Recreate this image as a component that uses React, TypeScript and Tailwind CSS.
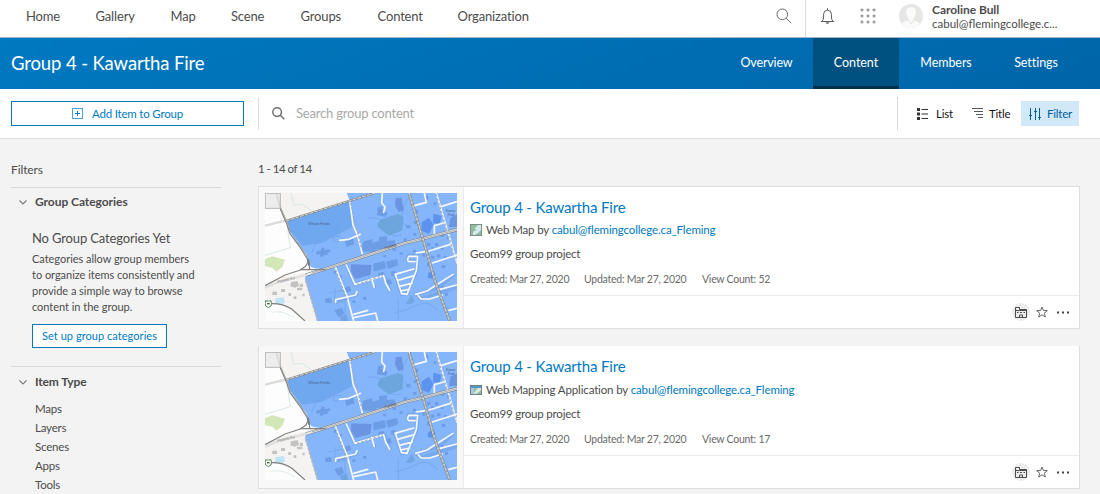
import React from "react";

function MapThumbnail() {
  return (
    <svg className="block h-32 w-48 shrink-0" viewBox="0 0 576 384" fill="none">
      <rect width="576" height="384" fill="#fdfdfd" />
      <path d="M38 0H250L255 24L62 84ZM0 270L60 250L118 238L120 258L157 384H120L60 340L0 330Z" fill="#f5f3f1" />
      <path d="M78 0L86 36L112 34L150 62M66 96L76 164L0 187" stroke="#cfe3e0" strokeWidth="2.5" />
      <path d="M0 98L64 82" stroke="#dadada" strokeWidth="7" />
      <path d="M0 198L22 190L60 200L52 222L34 236L22 224L0 220Z" fill="#d3e6b8" />
      <path d="M32 316L56 312L60 328L50 336L30 332Z" fill="#bfe3f7" />
      <path d="M20 358Q50 350 90 375" stroke="#cfe3d3" strokeWidth="2" />
      <path d="M22 296h14v10H22zM48 288h12v9H48zM78 268l20-4 4 14-12 6-14-4zM96 284h16v8H96zM104 272h10v10h-10zM70 300h8v9h-8zM86 310h8v8h-8zM112 302h7v8h-7z" fill="#c2c2c2" />
      <path d="M67 84L255 24L245 0H576V384H157L120 258L122 247L180 230L150 226L137 222L125 185L75 115Z" fill="#85b5fa" />
      <path d="M67 84L255 24L266 100L210 130L170 150L112 158L75 115Z" fill="#70a8f0" />
      <path d="M140 180Q160 120 205 132Q222 75 255 68M206 136q18-14 28 2q-8 12-28 8zM310 76Q345 66 370 110Q380 138 410 125M440 5Q408 35 410 85L440 110M520 355Q490 320 460 335T390 360M210 285V330M190 300L240 290V384M400 320V384" stroke="#6fa2ea" strokeWidth="2" />
      <g fill="#629fd0">
        <path d="M345 80L400 62L415 72L412 112L372 128L336 100Z" opacity=".7" />
        <path d="M430 320L440 306L450 325L440 332H422ZM225 370l20-5 5 19h-22z" opacity=".6" />
      </g>
      <path d="M392 16l18-2 6 38-16 6-10-22zM258 214l62 2-4 30-44 12-14-22zM556 74l20-10v38h-24z" fill="#6b94e3" />
      <path d="M470 88l22-14 14 22-14 26-22-8zM490 240l14-8 8 12-10 14-14-4zM505 62l25 6-6 26-20-4z" fill="#5b93ef" />
      <g fill="#6c9de5">
        <path d="M154 176l14-4 2-9 10 3-2 6 16-4 2 8-10 3 4 6-14 1-4 6-8-2 2-7-12 2z" />
        <path d="M294 146l28-8v12l20-6v-12l24-2v14l24-2v14l-30 4v12l-26-4v8h-44zM324 212l34-8 6 22-38 10zM362 206l34-8 4 18-30 12zM240 142l24-6 4 18-24 8zM338 44l14-5v14l16 6-6 12-26-4zM340 240l16-3 4 12-18 4zM362 262l14-4 5 14-14 5zM238 284l16-4 5 14-16 5zM208 352l22-8 8 18-18 10zM378 236l12-3 3 14-13 2zM180 318l18-4 2 16h-18z" />
        <path d="M416 136h10v10h-10zM430 142h10v9h-10zM444 120h10v8h-10zM458 134h10v8h-10zM424 96h12v10h-12zM446 84h10v8h-10zM486 150h10v9h-10zM498 162h9v9h-9zM510 150h10v10h-10zM526 160h10v10h-10zM498 188h10v9h-10zM516 184h10v9h-10zM536 190h10v9h-10zM486 210h10v10h-10zM530 216h11v9h-11zM400 150h12v8h-12zM383 166h10v8h-10zM354 186h9v7h-9zM404 178h9v8h-9zM444 170h9v8h-9zM472 182h8v9h-8zM528 122h10v9h-10zM546 130h9v9h-9zM528 280h9v8h-9zM540 300h9v8h-9zM536 340h9v8h-9zM206 234h8v8h-8zM222 246h9v8h-9zM262 322h9v8h-9zM294 312h10v8h-10zM324 278h9v9h-9zM480 8h10v12h-10zM450 50h9v10h-9zM506 28h8v9h-8z" />
      </g>
      <path d="M390 244L410 304L426 302L456 232L458 186L430 188V206L450 202M212 328L278 304M448 306L520 284L566 244M460 308L468 318L576 282M244 216L270 274L356 246L376 294" stroke="#6f9fe2" strokeWidth="11" strokeLinejoin="round" opacity=".55" />
      <g stroke="#f6f8fb" strokeWidth="5" strokeLinecap="round" strokeLinejoin="round">
        <path d="M254 24L264 96L278 128L292 182M224 142L252 139L286 124M352 0L350 30L360 42L356 58" />
        <path d="M210 220L246 310L266 384M212 328L212 320L272 306L276 296M244 216L270 274L356 248L362 270L374 292M320 256L328 284" />
        <path d="M266 364L308 352M266 374L332 360L338 384" />
        <path d="M390 244L446 228M392 246L410 302L426 304L454 232L458 190L432 190Q424 202 432 206L450 206M398 262L448 248M404 280L442 270M408 294L434 288M454 180L480 176" />
        <path d="M478 0L484 28L448 38M508 126V98L536 90M530 40L576 26M492 174L556 154M502 210L576 186M452 304L486 294L564 244M460 308L468 318H494L532 306M522 290L576 276M552 352L576 346M514 0L576 210" />
      </g>
      <path d="M514 4L574 206M257 30L290 170M276 274L354 248M212 230L248 324" stroke="#a5a5a5" strokeWidth="3" strokeDasharray="7 6" />
      <path d="M122 262L158 384" stroke="#b5b5b5" strokeWidth="5" strokeDasharray="9 4" />
      <path d="M0 284L32 270L122 246" stroke="#e1e1e1" strokeWidth="8" />
      <path d="M122 246L180 228L420 150L470 138L576 110" stroke="#747d86" strokeWidth="10" />
      <path d="M122 246L180 228L420 150L470 138L576 110" stroke="#e9e9e9" strokeWidth="6.5" />
      <path d="M140 240L180 228L420 150L470 138L576 110" stroke="#929292" strokeWidth="2" />
      <path d="M432 0L474 138L510 264L554 384" stroke="#727a80" strokeWidth="8" />
      <path d="M432 0L474 138L510 264L554 384" stroke="#d6d6d6" strokeWidth="5" />
      <path d="M434 6L474 138L510 264L554 384" stroke="#858585" strokeWidth="2" strokeDasharray="8 5" />
      <path d="M62 84L252 24L330 0" stroke="#7f7f7f" strokeWidth="6" />
      <path d="M62 84L252 24L330 0" stroke="#dddddd" strokeWidth="3" strokeDasharray="12 3" />
      <path d="M34 0L48 50L66 92L76 122L108 165L128 198L132 218" stroke="#6c6c6c" strokeWidth="5" />
      <path d="M35 0L49 50L67 92L77 122L109 165L128 198" stroke="#eeeeee" strokeWidth="1.5" />
      <path d="M0 278L60 246L104 232L122 220L132 202M104 230H182M134 228L132 204M0 334Q44 326 80 348L120 384" stroke="#818181" strokeWidth="3.5" />
      <text x="130" y="96" fontSize="11" fill="#3f638c" fontFamily="Liberation Sans">Wilson Fields</text>
      <text x="543" y="56" fontSize="10" fill="#3f638c" fontFamily="Liberation Sans">Kawar</text>
      <text x="548" y="68" fontSize="10" fill="#3f638c" fontFamily="Liberation Sans">Park</text>
      <text transform="translate(38 270) rotate(-13)" fontSize="11" fill="#777" fontFamily="Liberation Sans">Parkhill Rd</text>
      <text transform="translate(360 169) rotate(-15)" fontSize="11" fill="#333" fontFamily="Liberation Sans">Parkhill</text>
      <path d="M2 323q8 3 16 0q3 10 0 16l-8 5-8-5q-3-8 0-16Z" fill="#f8fff7" stroke="#5d8765" strokeWidth="3" />
      <path d="M6 332h8" stroke="#555" strokeWidth="4" />
      <rect x="1" y="1" width="45" height="45" fill="#e9e9e9" fillOpacity=".82" stroke="#b6b6b6" strokeWidth="3" />
    </svg>
  );
}

function SearchIcon({ className, strokeWidth }: { className: string; strokeWidth: number }) {
  return (
    <svg className={className} viewBox="0 0 16 16" fill="none" stroke="currentColor" strokeWidth={strokeWidth}>
      <circle cx="6.3" cy="6.3" r="5.3" />
      <path d="M10.2 10.2L15.2 15.2" />
    </svg>
  );
}

function ChevronIcon() {
  return (
    <svg className="mr-2 h-[5px] w-[8px]" viewBox="0 0 8 5" fill="none" stroke="#7a7a7a" strokeWidth="1.1">
      <path d="M.5.5L4 4L7.5.5" />
    </svg>
  );
}

function WebMapIcon() {
  return (
    <svg className="mr-1 h-3 w-3" viewBox="0 0 12 12">
      <rect width="12" height="12" fill="#7e8b8b" />
      <rect x="1" y="1" width="10" height="10" fill="#d5e8ed" />
      <path d="M1 1h7L5 4l1 2-3 2v3H1zM11 6v5H5l3-2z" fill="#8fc09b" />
    </svg>
  );
}

function WebAppIcon() {
  return (
    <svg className="mr-1 h-3 w-3" viewBox="0 0 12 12">
      <rect y="1" width="12" height="10" fill="#70838c" />
      <rect x="1" y="2" width="10" height="2" fill="#519ac7" />
      <rect x="1" y="4" width="3" height="6" fill="#a6cbe2" />
      <rect x="4" y="4" width="7" height="6" fill="#d8e9df" />
      <path d="M4 4h4L6 6 4 9zM11 6v4H6l3-2z" fill="#8ebd96" />
    </svg>
  );
}

const navItems = [
  { label: "Home", width: "w-[69.5px]" },
  { label: "Gallery", width: "w-[75px]" },
  { label: "Map", width: "w-[60.5px]" },
  { label: "Scene", width: "w-[69.5px]" },
  { label: "Groups", width: "w-[77px]" },
  { label: "Content", width: "w-[80px]" },
  { label: "Organization", width: "w-[80px]" },
];

function TopBar() {
  return (
    <header className="flex h-[38px] shrink-0 border-b border-[#9fb6c6] bg-white">
      <nav className="flex flex-1 pt-[6px] pl-[26px] text-[13px] leading-5 tracking-[-0.15px] text-[#4c4c4c]">
        {navItems.map((n) => (
          <a key={n.label} className={n.width}>{n.label}</a>
        ))}
      </nav>
      <div className="flex w-[30px] pt-2 pl-px text-[#6a6a6a]">
        <SearchIcon className="h-4 w-4" strokeWidth={1} />
      </div>
      <div className="flex w-[295px] border-l border-[#dadada]">
        <svg className="mt-[8px] ml-[14px] h-[17px] w-[15px]" viewBox="0 0 15 17" fill="none" stroke="#5d5d5d">
          <path d="M.8 13.5h13.4M2.2 13.2Q3.6 11.5 3.6 9V6.2Q3.7 2.2 7.5 2.2T11.4 6.2V9q0 2.5 1.4 4.2M7.5 2V.3" />
          <path d="M5.5 14.2q.3 1.800 2 1.800t2-1.800z" fill="#777" stroke="none" />
        </svg>
        <svg className="mt-[8px] ml-[25px] h-4 w-4" viewBox="0 0 16 16" fill="#b5b5b5" stroke="#858585" strokeWidth=".7">
          {[2, 8, 14].map((y) =>
            [2, 8, 14].map((x) => <circle key={`${x}-${y}`} cx={x} cy={y} r="1.15" />),
          )}
        </svg>
        <svg className="mt-[4px] ml-[23px] h-6 w-6" viewBox="0 0 24 24">
          <circle cx="12" cy="12" r="12" fill="#e6e6e4" />
          <path d="M12 3.2q5 0 4.900 5-.2 4-2.400 6v2l5 2q1.100.6 1.400 1.900A12 12 0 0 1 3.100 20q.3-1.300 1.400-1.900l5-2v-2Q7.200 12 7.100 8.200 7 3.200 12 3.200Z" fill="#fafafa" />
          <path d="M9.500 16.200l2.500 4 2.500-4" fill="none" stroke="#dededc" strokeWidth=".8" />
        </svg>
        <div className="ml-[9px] pt-[3px] leading-[14px] text-[#4c4c4c]">
          <div className="text-[12px] font-bold tracking-[-0.05px]">Caroline Bull</div>
          <div className="text-[11.5px] tracking-[0px]">cabul@flemingcollege.c...</div>
        </div>
      </div>
    </header>
  );
}

function Banner() {
  return (
    <div className="flex h-[51px] shrink-0 bg-[linear-gradient(160deg,#0079c1_0%,#0065a8_100%)] text-white">
      <h1 className="flex-1 pl-[11px] text-[18.5px] leading-[50px] tracking-[-0.12px]">Group 4 - Kawartha Fire</h1>
      <nav className="flex pr-[21px] text-center text-[12.5px] leading-[50px] tracking-[-0.05px]">
        <a className="w-[93px] tracking-[-0.15px]">Overview</a>
        <a className="w-[86px] border-b-3 border-[#00304d] bg-[#005180]">Content</a>
        <a className="w-[94px]">Members</a>
        <a className="w-[86px]">Settings</a>
      </nav>
    </div>
  );
}

function Toolbar() {
  return (
    <div className="flex h-[50px] shrink-0 border-b border-[#dfdfdf] bg-white pt-2 text-[11.5px] tracking-[-0.2px]">
      <button className="mt-1 ml-[11px] flex h-[25px] w-[233px] items-center justify-center border border-[#0079c1] text-[#0079c1]">
        <svg className="mr-[9px] h-[11px] w-[11px]" viewBox="0 0 11 11" fill="none" stroke="#0079c1">
          <rect x=".5" y=".5" width="10" height="10" opacity=".7" />
          <path d="M3 5.500h5M5.500 3v5" />
        </svg>
        Add Item to Group
      </button>
      <div className="ml-[14px] flex h-[33px] flex-1 items-center border-l border-[#dedede] pl-[13px]">
        <SearchIcon className="mr-[11px] h-[13px] w-[13px] text-[#6e6e6e]" strokeWidth={1.8} />
        <span className="text-[13px] tracking-[-0.2px] text-[#a9a9a9]">Search group content</span>
      </div>
      <div className="flex h-[33px] w-[203px] items-center border-l border-[#dadada] pl-[19px] text-[#151515]">
        <svg className="mr-2 h-[12px] w-[11px]" viewBox="0 0 11 12" fill="#333">
          <path d="M0 0h3v3H0zM0 4.500h3v3H0zM0 9h3v3H0zM4.500 1h6.500v1H4.500zM4.500 5.500h6.500v1H4.500zM4.500 10h6.500v1H4.500z" />
        </svg>
        <span className="w-[36px]">List</span>
        <svg className="mr-[6px] h-[11px] w-[11px]" viewBox="0 0 11 11" stroke="#555">
          <path d="M0 .5h11M2 3.500h9M4 6.500h7M6 9.500h5" />
        </svg>
        <span className="w-[32px]">Title</span>
        <span className="flex h-[25px] w-[58px] items-center bg-[#d0e8f8] pl-2 text-[#00609b]">
          <svg className="mr-[6px] h-[12px] w-[12px]" viewBox="0 0 12 12" stroke="#00619b">
            <path d="M1.500 0v12M6.500 0v12M10.500 0v12M0 7.500h3M5 3.500h3M9 9.500h3" />
          </svg>
          Filter
        </span>
      </div>
    </div>
  );
}

function Sidebar() {
  return (
    <aside className="w-[258px] shrink-0 pl-[11px] text-[12px] text-[#4c4c4c]">
      <div className="h-[49px] w-[210px] border-b border-[#dadada] pt-[21px] leading-5 tracking-[-0.1px]">Filters</div>
      <section className="h-[179px] w-[210px] border-b border-[#dadada] pt-[4px]">
        <h2 className="flex items-center pl-[8px] leading-5 font-bold tracking-[-0.05px]">
          <ChevronIcon />
          Group Categories
        </h2>
        <div className="pl-[21px]">
          <h3 className="mt-[16px] text-[13px] leading-5 tracking-[-0.14px]">No Group Categories Yet</h3>
          <p className="mt-[3px] text-[11px] leading-4 tracking-[-0.03px] whitespace-nowrap">
            Categories allow group members
            <br />
            to organize items consistently and
            <br />
            provide a simple way to browse
            <br />
            content in the group.
          </p>
          <button className="mt-[9px] h-6 w-[135px] border border-[#0079c1] bg-white text-[11px] tracking-[0.05px] text-[#0079c1]">
            Set up group categories
          </button>
        </div>
      </section>
      <section className="pt-[5px]">
        <h2 className="flex items-center pl-[8px] leading-5 font-bold tracking-[-0.12px]">
          <ChevronIcon />
          Item Type
        </h2>
        <ul className="mt-[7px] pl-[24px] text-[11.5px] leading-[19px] tracking-[-0.2px]">
          {["Maps", "Layers", "Scenes", "Apps", "Tools"].map((t) => (
            <li key={t}>{t}</li>
          ))}
        </ul>
      </section>
    </aside>
  );
}

function CardActions() {
  return (
    <div className="flex h-[33px] items-center justify-end border-t border-[#ebebeb] pr-[10px]">
      <svg className="h-[18px] w-[18px]" viewBox="0 0 18 18" fill="none" stroke="#4b4b4b">
        <circle cx="9" cy="9" r="9" fill="#ededed" stroke="none" />
        <path d="M3.500 14.500V4.500h4v2h7v8H3.500M3.500 7.500h11M7.500 14.500v-2.500h3v2.500" />
        <path d="M5 9.500h1.500M8 9.500h2M11.500 9.500h1.500" />
      </svg>
      <svg className="ml-[6px] h-[12px] w-[12px]" viewBox="0 0 12 12" fill="none" stroke="#555" strokeWidth=".9">
        <path d="M6 1L7.400 4.500L11.300 4.700L8.300 7.100L9.300 11L6 8.800L2.700 11L3.700 7.100L.7 4.700L4.600 4.500Z" />
      </svg>
      <svg className="ml-[9px] h-[3px] w-[12px]" viewBox="0 0 12 3" fill="#444">
        <rect x="0" y=".5" width="2" height="2" />
        <rect x="5" y=".5" width="2" height="2" />
        <rect x="10" y=".5" width="2" height="2" />
      </svg>
    </div>
  );
}

interface ItemCardProps {
  icon: React.ReactNode;
  kind: string;
  views: number;
  frame: string;
  titleSpacing: string;
}

function ItemCard({ icon, kind, views, frame, titleSpacing }: ItemCardProps) {
  return (
    <article className={`mb-[17px] flex h-[143px] w-[822px] border-x border-b border-[#dfdfdf] bg-white ${frame}`}>
      <div className="flex w-[205px] shrink-0 border-r border-[#ebebeb] bg-[#f8f8f8] pt-[6px] pl-[6px]">
        <MapThumbnail />
      </div>
      <div className="flex flex-1 flex-col justify-between">
        <div className="pt-[10px] pl-[6px]">
          <h2 className={`text-[15px] leading-5 tracking-[-0.16px] text-[#0079c1] ${titleSpacing}`}>Group 4 - Kawartha Fire</h2>
          <div className="flex items-center text-[11.5px] leading-5 tracking-[-0.14px] text-[#4c4c4c]">
            {icon}
            <span className="whitespace-pre">{kind} by </span>
            <a className="text-[#0079c1]">cabul@flemingcollege.ca_Fleming</a>
          </div>
          <p className="mt-[4px] text-[11.5px] leading-5 tracking-[-0.2px] text-[#4c4c4c]">Geom99 group project</p>
          <div className="mt-[5px] flex text-[10.5px] leading-5 tracking-[-0.25px] text-[#6a6a6a]">
            <span className="w-[114px]">Created: Mar 27, 2020</span>
            <span className="w-[118px]">Updated: Mar 27, 2020</span>
            <span>View Count: {views}</span>
          </div>
        </div>
        <CardActions />
      </div>
    </article>
  );
}

export default function App() {
  return (
    <div className="flex h-[494px] w-[1100px] flex-col overflow-hidden bg-[#f3f3f3] font-['Lato',sans-serif]">
      <TopBar />
      <Banner />
      <Toolbar />
      <main className="flex flex-1">
        <Sidebar />
        <div>
          <div className="mb-[7px] pt-[20px] text-[11.5px] leading-5 tracking-[-0.5px] text-[#4c4c4c]">1 - 14 of 14</div>
          <ItemCard icon={<WebMapIcon />} kind="Web Map" views={52} frame="border-t" titleSpacing="mb-[3px]" />
          <ItemCard icon={<WebAppIcon />} kind="Web Mapping Application" views={17} frame="border-t-0" titleSpacing="mb-[4px]" />
        </div>
      </main>
    </div>
  );
}
